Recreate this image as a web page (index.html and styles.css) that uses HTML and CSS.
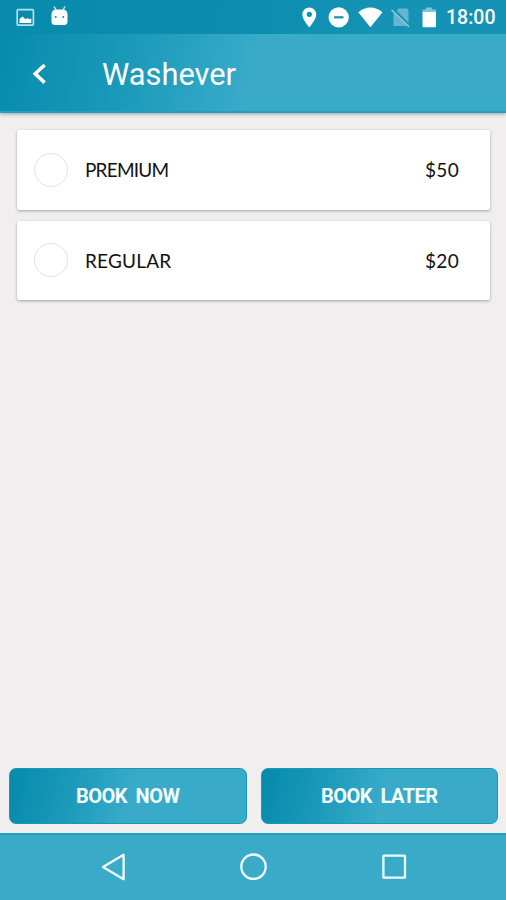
FILE: index.html
```html
<!DOCTYPE html>
<html lang="en">
<head>
<meta charset="utf-8">
<title>Washever</title>
<link rel="stylesheet" href="styles.css">
</head>
<body>
<header class="header">
  <div class="status">
    <svg class="status-left" width="80" height="34" viewBox="0 0 80 34">
      <rect x="17.2" y="9.7" width="16.2" height="15.4" rx="1" fill="none" stroke="#b9e1ed" stroke-width="1.7"/>
      <path d="M19.5 23v-4l3-2.500 3 2.800 2-1.200 2 1.200 1.800-.8V23z" fill="#fff"/>
      <path d="M51.500 14.500q0-4 3.500-5h9q3.500 1 3.500 5v7q0 3.500-3.500 3.500h-9q-3.500 0-3.500-3.500z" fill="#fff"/>
      <path d="M56 10l-2-3.500M63 10l2-3.500" stroke="#c9e9f2" stroke-width="1.500"/>
      <circle cx="55.700" cy="17" r="1" fill="#168fae"/><circle cx="63.300" cy="17" r="1" fill="#168fae"/>
    </svg>
    <svg class="status-right" width="144" height="34" viewBox="296 0 144 34">
      <path fill="#fff" fill-rule="evenodd" d="M309.300 7.400a7 7 0 0 0-7 7c0 5.200 7 12.800 7 12.800s7-7.600 7-12.800a7 7 0 0 0-7-7zm0 4.300a2.600 2.600 0 1 1 0 5.200 2.600 2.600 0 0 1 0-5.200z"/>
      <circle cx="338.700" cy="17.400" r="10.100" fill="#fff"/>
      <path d="M334 17.300h9.500" stroke="#1593b2" stroke-width="2.200"/>
      <path d="M358.300 12.200q12.100-9.200 24.200 0L370.400 27.200z" fill="#fff"/>
      <path d="M393.500 14l5-5.600h8a2 2 0 0 1 2 2V26h-15z" fill="#62b6cf"/>
      <path d="M393.300 9l16.500 16.500" stroke="#1593b2" stroke-width="2"/>
      <path d="M391.500 9.800l17.500 17" stroke="#80c5d9" stroke-width="1.700"/>
      <path d="M422.500 11v-1.500h3.500V7.400h6v2.100h4V12h-13.500z" fill="#80c5d9"/>
      <path d="M422.500 12H436v14.300a1 1 0 0 1-1 1h-11.500a1 1 0 0 1-1-1z" fill="#fff"/>
    </svg>
    <span class="clock">18:00</span>
  </div>
  <div class="toolbar">
    <svg class="back" width="16" height="22" viewBox="0 0 16 22"><path d="M13.600 2L4.200 10.800l9.400 8.800" fill="none" stroke="#fff" stroke-width="3.500"/></svg>
    <h1 class="title">Washever</h1>
  </div>
</header>
<main class="options">
  <div class="card"><span class="radio"></span><span class="name premium">PREMIUM</span><span class="price">$50</span></div>
  <div class="card"><span class="radio"></span><span class="name">REGULAR</span><span class="price">$20</span></div>
</main>
<div class="actions">
  <button class="button">BOOK NOW</button>
  <button class="button">BOOK LATER</button>
</div>
<nav class="navbar">
  <svg width="506" height="67" viewBox="0 0 506 67" fill="none" stroke="#f0fdff" stroke-width="2.300" stroke-linejoin="round">
    <path d="M123.600 21.800v24.500L103 34z"/>
    <circle cx="253.500" cy="33.700" r="12.200"/>
    <rect x="383.400" y="22.700" width="21.600" height="22" rx=".5"/>
  </svg>
</nav>
</body>
</html>
```
FILE: styles.css
```css
* { box-sizing: border-box; }
body {
  margin: 0;
  width: 506px;
  height: 900px;
  display: flex;
  flex-direction: column;
  overflow: hidden;
  background: #f0eeef;
  font-family: Roboto, sans-serif;
}
.header {
  height: 113px;
  background: linear-gradient(103deg, #078cae 3%, #1b99b9 26%, #39abc9 51%);
  border-bottom: 2px solid #20a0c0;
  box-shadow: 0 1px 4px rgba(0, 0, 0, .35);
}
.status {
  height: 34px;
  display: flex;
  align-items: center;
  background: linear-gradient(100deg, #078aac, #0b8eb0 50%, #1593b4 75%);
}
.status-right { margin-left: 216px; }
.clock {
  width: 60px;
  padding: 2px 0 0 6px;
  color: #fff;
  font-size: 19.500px;
  font-weight: 500;
  line-height: 24px;
}
.toolbar {
  height: 77px;
  display: flex;
  align-items: center;
  padding: 2px 0 0 31px;
}
.title {
  margin: 3px 0 0 55px;
  color: #fff;
  font-size: 30.800px;
  font-weight: 400;
  line-height: 40px;
}
.options {
  flex: 1;
  padding: 17px 16px 0 17px;
  display: flex;
  flex-direction: column;
  gap: 11px;
}
.card {
  height: 79.500px;
  display: flex;
  align-items: center;
  padding: 0 31px 0 17px;
  background: #fff;
  border-radius: 2px;
  box-shadow: 0 1px 3px rgba(0, 0, 0, .32);
  color: #111;
  font-family: Lato, sans-serif;
  font-size: 19px;
}
.radio {
  width: 34px;
  height: 34px;
  margin-right: 17px;
  border: 1.500px solid #e2e2e2;
  border-radius: 50%;
}
.name { flex: 1; letter-spacing: .2px; }
.name.premium { letter-spacing: -.8px; }
.price { letter-spacing: .3px; }
.actions {
  display: flex;
  gap: 14px;
  padding: 0 8px 9px 9px;
}
.button {
  flex: 1;
  height: 56px;
  padding: 0;
  border: 1px solid #159abb;
  border-radius: 7px;
  background: linear-gradient(103deg, #078cae 3%, #1b99b9 25%, #39abc9 52%);
  color: #f5feff;
  font-family: Roboto, sans-serif;
  font-size: 20px;
  font-weight: 700;
  letter-spacing: -.5px;
  word-spacing: 4px;
}
.navbar {
  height: 67px;
  border-top: 2px solid #20a0c0;
  background: #39abc9;
}
.navbar svg { display: block; margin-top: -2px; }
```
